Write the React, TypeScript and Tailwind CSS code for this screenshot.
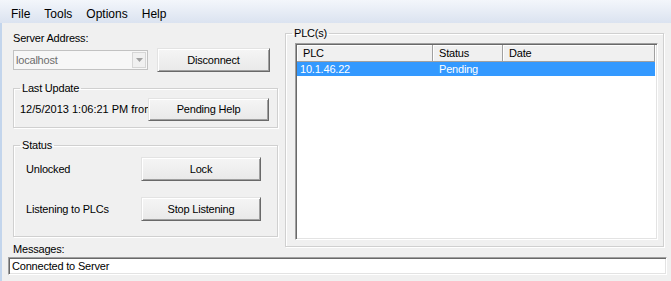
const font = { fontFamily: '"Liberation Sans", Arial, sans-serif' }

function WinButton({ label, className }: { label: string; className: string }) {
  return (
    <button
      className={`flex items-center justify-center border border-t-[#e3e3e3] border-l-[#e3e3e3] border-b-[#696969] border-r-[#696969] bg-gradient-to-b from-[#f5f5f5] to-[#e9e9e9] text-[11px] text-black shadow-[inset_1px_1px_0_#fff,inset_-1px_-1px_0_#a0a0a0] ${className}`}
    >
      {label}
    </button>
  )
}

// the legend sits inside the fieldset padding, so legendClass offsets it back
function GroupBox({
  title,
  className,
  legendClass,
  children,
}: {
  title: string
  className: string
  legendClass: string
  children: React.ReactNode
}) {
  return (
    <fieldset
      className={`min-w-0 border border-[#d0d0d0] shadow-[inset_1px_1px_0_#fff,1px_1px_0_#fff] ${className}`}
    >
      <legend className={`px-[2px] text-[11px] leading-[13px] text-black ${legendClass}`}>{title}</legend>
      {children}
    </fieldset>
  )
}

const menuItems = ["File", "Tools", "Options", "Help"]

export default function App() {
  return (
    <div
      className="flex h-[281px] w-[671px] flex-col overflow-hidden bg-[#f0f0f0] text-[11px] tracking-[-0.2px] text-black"
      style={font}
    >
      {/* Menu */}
      <div className="flex h-[23px] items-center bg-gradient-to-b from-[#f3f6fb] to-[#dbe3f0] pl-[4px] pt-[4px] text-[12px] tracking-normal">
        {menuItems.map((m) => (
          <span key={m} className="px-[7px]">
            {m}
          </span>
        ))}
      </div>

      <div className="flex flex-1 flex-col border-l-2 border-[#c3d5ec]">
        <div className="flex pt-[4px]">
          {/* Left column */}
          <div className="ml-[11px] flex w-[265px] flex-col pt-[5px]">
            <div className="h-[13px] leading-[13px]">Server Address:</div>
            <div className="mt-[3px] flex h-[24px] items-center">
              <div className="flex h-[20px] w-[135px] items-center border border-[#c2c2c2] bg-[#f7f7f7]">
                <span className="flex-1 pl-[2px] text-[#6d6d6d]">localhost</span>
                <div className="mr-[1px] flex h-[16px] w-[14px] items-center justify-center border border-[#d6d6d6] bg-[#f0f0f0]">
                  <svg width="7" height="4" viewBox="0 0 7 4">
                    <path d="M0 0h7L3.5 4z" fill="#a0a0a0" />
                  </svg>
                </div>
              </div>
              <WinButton label="Disconnect" className="ml-[9px] h-[24px] w-[113px]" />
            </div>

            <GroupBox
              title="Last Update"
              legendClass="ml-0"
              className="mt-[10px] h-[46px] pb-[6px] pl-[6px] pr-[8px] pt-[3px]"
            >
              <div className="flex h-[23px] items-center">
                <div className="min-w-0 flex-1 overflow-hidden whitespace-nowrap tracking-normal">
                  12/5/2013 1:06:21 PM from
                </div>
                <WinButton label="Pending Help" className="h-[23px] w-[121px] shrink-0" />
              </div>
            </GroupBox>

            <GroupBox
              title="Status"
              legendClass="-ml-[6px]"
              className="mt-[11px] h-[98px] pl-[12px] pr-[16px] pt-[5px]"
            >
              <div className="flex h-[24px] items-center justify-between">
                <span>Unlocked</span>
                <WinButton label="Lock" className="h-[24px] w-[120px]" />
              </div>
              <div className="mt-[16px] flex h-[24px] items-center justify-between">
                <span>Listening to PLCs</span>
                <WinButton label="Stop Listening" className="h-[24px] w-[120px]" />
              </div>
            </GroupBox>

            <div className="mt-[6px] h-[13px] leading-[13px]">Messages:</div>
          </div>

          {/* PLC group */}
          <GroupBox
            title="PLC(s)"
            legendClass="-ml-[3px]"
            className="ml-[7px] h-[220px] w-[379px] pb-[6px] pl-[9px] pr-[5px] pt-[3px]"
          >
            <div className="flex h-full flex-col border border-t-[#a0a0a0] border-l-[#a0a0a0] border-b-white border-r-white bg-white shadow-[inset_1px_1px_0_#696969,inset_-1px_-1px_0_#e3e3e3]">
              <div className="ml-[1px] mt-[1px] flex h-[17px] text-[11px]">
                <div className="flex w-[136px] items-center border-b border-r border-[#a0a0a0] bg-[#f0f0f0] pl-[6px] shadow-[inset_1px_1px_0_#fff]">
                  PLC
                </div>
                <div className="flex w-[70px] items-center border-b border-r border-[#a0a0a0] bg-[#f0f0f0] pl-[6px] shadow-[inset_1px_1px_0_#fff]">
                  Status
                </div>
                <div className="flex w-[152px] items-center border-b border-r border-[#a0a0a0] bg-[#f0f0f0] pl-[6px] shadow-[inset_1px_1px_0_#fff]">
                  Date
                </div>
              </div>
              <div className="ml-[1px] mr-[2px] flex h-[14px] items-center bg-[#3399ff] text-white">
                <span className="w-[136px] pl-[3px]">10.1.46.22</span>
                <span className="pl-[6px]">Pending</span>
              </div>
            </div>
          </GroupBox>
        </div>

        {/* Messages box */}
        <div className="ml-[6px] mt-[1px] flex h-[18px] w-[659px] items-center border border-t-[#a0a0a0] border-l-[#a0a0a0] border-b-white border-r-white bg-white pl-[3px] shadow-[inset_1px_1px_0_#696969,inset_-1px_-1px_0_#e3e3e3]">
          Connected to Server
        </div>
      </div>
    </div>
  )
}
